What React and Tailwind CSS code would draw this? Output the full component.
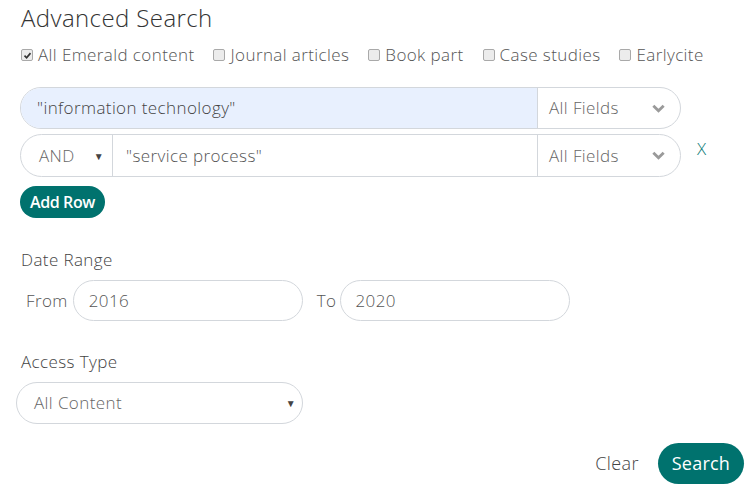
import { useState } from "react";

const Box = ({ checked }) => (
  <span className="inline-flex items-center justify-center w-[12px] h-[12px] rounded-[2px] border border-[#a9a9a9] bg-[#ececec] shrink-0">
    {checked && (
      <svg viewBox="0 0 12 12" className="w-[9px] h-[9px]">
        <path d="M2 6.2 L4.8 9 L10 2.8" fill="none" stroke="#333" strokeWidth="2.2" />
      </svg>
    )}
  </span>
);

const Chevron = () => (
  <svg viewBox="0 0 16 16" className="w-[15px] h-[15px]">
    <path d="M2.5 5 L8 10.5 L13.5 5" fill="none" stroke="#9a9a9a" strokeWidth="3" />
  </svg>
);

const Caret = () => <span className="text-[10px] text-[#444] leading-none">▼</span>;

export default function App() {
  const [types, setTypes] = useState({
    all: true,
    journal: false,
    book: false,
    cases: false,
    early: false,
  });

  const typeList = [
    ["all", "All Emerald content"],
    ["journal", "Journal articles"],
    ["book", "Book part"],
    ["cases", "Case studies"],
    ["early", "Earlycite"],
  ];

  return (
    <div className="w-[753px] h-[491px] bg-white pl-[21px] pr-[9px] font-['Open_Sans',sans-serif] font-light tracking-[0.4px] text-[#555] overflow-hidden">
      {/* title */}
      <h1 className="mt-[2px] text-[24px] leading-[31px] text-[#333]">Advanced Search</h1>

      {/* content types */}
      <div className="mt-[10px] flex items-center gap-[19px] text-[17px] leading-[24px]">
        {typeList.map(([key, label]) => (
          <label
            key={key}
            className="flex items-center gap-[5px] cursor-pointer"
            onClick={() => setTypes({ ...types, [key]: !types[key] })}
          >
            <Box checked={types[key]} />
            <span>{label}</span>
          </label>
        ))}
      </div>

      {/* row 1 */}
      <div className="mt-[20px] flex items-center w-[661px] ml-[-1px] h-[42px] rounded-full border border-[#d3d7dc] overflow-hidden">
        <div className="flex-1 h-full bg-[#e8f0fe] flex items-center pl-[16px] text-[17px] text-[#444]">
          "information technology"
        </div>
        <div className="w-[143px] h-full border-l border-[#d3d7dc] flex items-center justify-between pl-[11px] pr-[14px] text-[17px] text-[#666]">
          <span>All Fields</span>
          <Chevron />
        </div>
      </div>

      {/* row 2 */}
      <div className="mt-[5px] flex items-center">
        <div className="flex items-center w-[661px] ml-[-1px] h-[43px] rounded-full border border-[#d3d7dc] overflow-hidden">
          <div className="w-[91px] h-full flex items-center justify-between pl-[18px] pr-[8px] text-[17px] text-[#666]">
            <span>AND</span>
            <Caret />
          </div>
          <div className="flex-1 h-full border-l border-[#d3d7dc] flex items-center pl-[13px] text-[17px] text-[#555]">
            "service process"
          </div>
          <div className="w-[143px] h-full border-l border-[#d3d7dc] flex items-center justify-between pl-[11px] pr-[14px] text-[17px] text-[#666]">
            <span>All Fields</span>
            <Chevron />
          </div>
        </div>
        <button className="ml-[16px] mt-[-14px] text-[17px] text-[#0a7a76]">X</button>
      </div>

      <button className="mt-[9px] block ml-[-1px] h-[32px] px-[10px] rounded-full bg-[#00726e] text-white text-[16px] font-semibold tracking-[-0.4px]">
        Add Row
      </button>

      {/* date range */}
      <div className="mt-[30px] text-[17px] leading-[24px] text-[#444]">Date Range</div>
      <div className="mt-[8px] flex items-center text-[17px] text-[#555]">
        <span className="ml-[5px] mr-[5px]">From</span>
        <div className="w-[230px] h-[41px] rounded-full border border-[#d3d7dc] flex items-center pl-[15px]">2016</div>
        <span className="ml-[14px] mr-[4px]">To</span>
        <div className="w-[230px] h-[41px] rounded-full border border-[#d3d7dc] flex items-center pl-[14px]">2020</div>
      </div>

      {/* access type */}
      <div className="mt-[29px] text-[17px] leading-[24px] text-[#444]">Access Type</div>
      <div className="mt-[8px] ml-[-5px] w-[287px] h-[42px] rounded-full border border-[#d3d7dc] flex items-center justify-between pl-[17px] pr-[6px] text-[17px] text-[#666]">
        <span>All Content</span>
        <Caret />
      </div>

      {/* actions */}
      <div className="mt-[19px] flex items-center justify-end gap-[19px]">
        <button className="text-[18px] text-[#444]">Clear</button>
        <button className="h-[41px] px-[14px] rounded-full bg-[#00726e] text-white text-[18px] font-normal tracking-[0.2px]">Search</button>
      </div>
    </div>
  );
}
